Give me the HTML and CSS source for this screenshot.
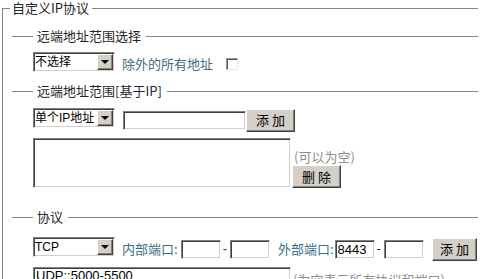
FILE: index.html
```html
<!DOCTYPE html>
<html lang="zh-CN">
<head>
    <meta charset="UTF-8">
    <title>自定义IP协议</title>
    <link rel="stylesheet" href="styles.css">
</head>
<body>
    <fieldset class="group">
        <legend class="group-title">自定义IP协议</legend>

        <fieldset class="section section-mode">
            <legend class="section-title">远端地址范围选择</legend>
            <div class="row">
                <span class="select-wrap">
                    <select class="select"><option>不选择</option></select>
                </span>
                <label class="label label-except" for="except">除外的所有地址</label>
                <input type="checkbox" id="except" class="check">
            </div>
        </fieldset>

        <fieldset class="section section-ip">
            <legend class="section-title">远端地址范围[基于IP]</legend>
            <div class="row">
                <span class="select-wrap">
                    <select class="select"><option>单个IP地址</option></select>
                </span>
                <input type="text" class="field field-ip">
                <button type="button" class="btn">添 加</button>
            </div>
            <div class="list-row">
                <textarea class="list"></textarea>
                <div class="side">
                    <span class="hint">(可以为空)</span>
                    <button type="button" class="btn">删 除</button>
                </div>
            </div>
        </fieldset>

        <fieldset class="section section-proto">
            <legend class="section-title">协议</legend>
            <div class="row">
                <span class="select-wrap">
                    <select class="select"><option>TCP</option></select>
                </span>
                <label class="label label-port">内部端口:</label>
                <input type="text" class="field field-port">
                <span class="dash">-</span>
                <input type="text" class="field field-port">
                <label class="label label-port label-ext">外部端口:</label>
                <input type="text" class="field field-port" value="8443">
                <span class="dash">-</span>
                <input type="text" class="field field-port">
                <button type="button" class="btn btn-narrow">添 加</button>
            </div>
            <div class="list-row list-row-top">
                <textarea class="list">UDP::5000-5500</textarea>
                <span class="hint hint-top">(为空表示所有协议和端口)</span>
            </div>
        </fieldset>
    </fieldset>
</body>
</html>
```

FILE: styles.css
```css
:root {
    --line: #76898f;
    --face: #d4d0c8;
    --shadow: #808080;
    --dark: #404040;
    --label: #3a6d86;
    --hint: #8d8d8d;
}

body {
    margin: 0;
    background: #fff;
    color: #1d262b;
    font: 13px/16px "Noto Sans CJK SC", "Liberation Sans", sans-serif;
}

.group {
    margin: 0 8px 0 2px;
    padding: 0 0 0 7px;
    border: 0;
    border-top: 1px solid var(--line);
    border-left: 1px solid var(--line);
    min-width: 0;
}
.group-title {
    padding: 0 3px 0 2px;
    line-height: 16px;
}

.section {
    margin: 12px 0 0 2px;
    padding: 8px 0 0 21px;
    border: 0;
    border-top: 1px solid var(--line);
    min-width: 0;
}
.section-title {
    padding: 0 5px 0 4px;
    line-height: 16px;
}
.section-ip { margin-top: 7px; padding-top: 9px; }
.section-proto { margin-top: 21px; padding-top: 12px; }

.row {
    display: flex;
    align-items: center;
}

/* classic select */
.select-wrap {
    position: relative;
    display: inline-block;
    margin-bottom: 4px;
}
.select {
    appearance: none;
    -webkit-appearance: none;
    display: block;
    width: 82px;
    height: 20px;
    margin: 0;
    padding: 0 16px 0 1px;
    border: 1px solid;
    border-color: var(--shadow) #fff #fff var(--shadow);
    box-shadow: inset 1px 1px 0 var(--dark), inset -1px -1px 0 var(--face);
    background: #fff;
    color: #000;
    font: 12px/16px "Liberation Sans", "Noto Sans CJK SC", sans-serif;
    border-radius: 0;
    outline: none;
}
.select-wrap::before {
    content: "";
    position: absolute;
    top: 2px;
    right: 2px;
    width: 14px;
    height: 14px;
    background: var(--face);
    border: 1px solid;
    border-color: #fff var(--dark) var(--dark) #fff;
    box-shadow: inset -1px -1px 0 var(--shadow);
}
.select-wrap::after {
    content: "";
    position: absolute;
    top: 8px;
    right: 6px;
    border-left: 4px solid transparent;
    border-right: 4px solid transparent;
    border-top: 4px solid #000;
}

.label {
    color: var(--label);
    white-space: nowrap;
}
.label-except { margin-left: 7px; }
.label-port { margin-left: 7px; margin-right: 3px; }
.label-ext { margin-left: 8px; margin-right: 1px; }

.check {
    appearance: none;
    -webkit-appearance: none;
    width: 12px;
    height: 12px;
    margin: 0 0 0 13px;
    border: 1px solid;
    border-color: #9a9a9a #e8e8e8 #e8e8e8 #9a9a9a;
    box-shadow: inset 1px 1px 0 #555;
    background: #fff;
}

.field {
    box-sizing: border-box;
    height: 19px;
    margin: 0;
    padding: 0 2px;
    border: 1px solid;
    border-color: var(--shadow) #fff #fff var(--shadow);
    box-shadow: inset 1px 1px 0 var(--dark), inset -1px -1px 0 var(--face);
    background: #fff;
    color: #000;
    font: 13px/15px "Liberation Sans", sans-serif;
    outline: none;
}
.field-ip { width: 123px; margin-left: 8px; }
.field-port { width: 40px; }

.dash {
    margin: 0 3px 0 2px;
    color: #333;
    font-family: "Liberation Sans", sans-serif;
}

.btn {
    box-sizing: border-box;
    width: 49px;
    height: 23px;
    margin: 0;
    padding: 0;
    border: 1px solid;
    border-color: #fff var(--dark) var(--dark) #fff;
    box-shadow: inset -1px -1px 0 var(--shadow);
    background: var(--face);
    color: #000;
    font: 13px/16px "Noto Sans CJK SC", sans-serif;
    border-radius: 0;
}
.btn-narrow { width: 45px; margin-left: 8px; }

.list-row {
    display: flex;
    align-items: flex-end;
    margin-top: 6px;
}
.list-row-top { align-items: flex-start; }

.list {
    box-sizing: border-box;
    display: block;
    width: 258px;
    height: 50px;
    margin: 0;
    padding: 0 2px;
    border: 1px solid;
    border-color: var(--shadow) #fff #fff var(--shadow);
    box-shadow: inset 1px 1px 0 var(--dark), inset -1px -1px 0 var(--face);
    background: #fff;
    color: #000;
    font: 13px/16px "Liberation Sans", sans-serif;
    resize: none;
    outline: none;
}

.side {
    display: flex;
    flex-direction: column;
    align-items: flex-start;
    margin-left: 1px;
}
.hint {
    margin-left: 2px;
    color: var(--hint);
    white-space: nowrap;
}
.hint-top { margin-top: 5px; }
```
